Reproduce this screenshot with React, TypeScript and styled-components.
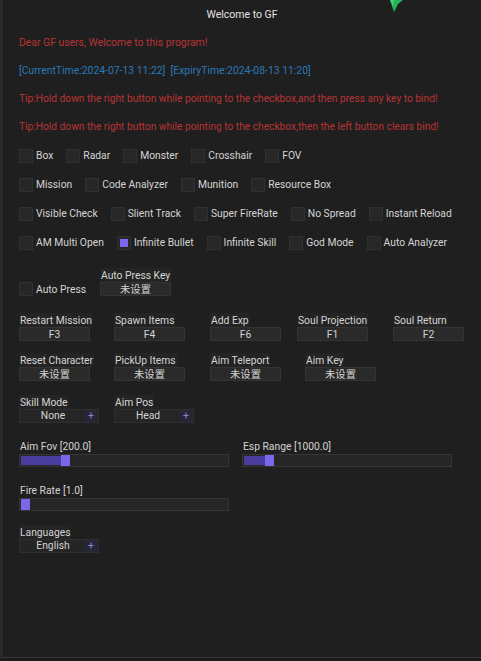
import styled, { createGlobalStyle } from "styled-components";

const Global = createGlobalStyle`
	html, body {
		margin: 0;
		padding: 0;
		background: #1c1c1c;
	}
	* {
		box-sizing: border-box;
	}
`;

const palette = {
	bg: "#1f1f1f",
	text: "#d4d4d4",
	red: "#b83434",
	blue: "#2a79b8",
	frame: "#272727",
	frameEdge: "#303030",
	accent: "#7a68ea",
	accentDim: "#4a3d9e",
};

type Feature = { name: string; on?: boolean };

const featureRows: Feature[][] = [
	[{ name: "Box" }, { name: "Radar" }, { name: "Monster" }, { name: "Crosshair" }, { name: "FOV" }],
	[{ name: "Mission" }, { name: "Code Analyzer" }, { name: "Munition" }, { name: "Resource Box" }],
	[
		{ name: "Visible Check" },
		{ name: "Slient Track" },
		{ name: "Super FireRate" },
		{ name: "No Spread" },
		{ name: "Instant Reload" },
	],
	[
		{ name: "AM Multi Open" },
		{ name: "Infinite Bullet", on: true },
		{ name: "Infinite Skill" },
		{ name: "God Mode" },
		{ name: "Auto Analyzer" },
	],
];

type Bind = { name: string; key: string; gap: number };

const bindRows: Bind[][] = [
	[
		{ name: "Restart Mission", key: "F3", gap: 0 },
		{ name: "Spawn Items", key: "F4", gap: 24 },
		{ name: "Add Exp", key: "F6", gap: 25 },
		{ name: "Soul Projection", key: "F1", gap: 16 },
		{ name: "Soul Return", key: "F2", gap: 25 },
	],
	[
		{ name: "Reset Character", key: "未设置", gap: 0 },
		{ name: "PickUp Items", key: "未设置", gap: 24 },
		{ name: "Aim Teleport", key: "未设置", gap: 25 },
		{ name: "Aim Key", key: "未设置", gap: 24 },
	],
];

const App = () => {
	return (
		<Window>
			<Global />
			<Cursor width="16" height="14" viewBox="0 0 16 14">
				<polygon points="2,0 15,0 10,4 6,12" fill="#27b45a" />
				<polygon points="2,0 6,0 5,6" fill="#3fd374" />
			</Cursor>
			<Title>Welcome to GF</Title>
			<Messages>
				<Message $color={palette.red}>Dear GF users, Welcome to this program!</Message>
				<Message $color={palette.blue}>
					[CurrentTime:2024-07-13 11:22]&nbsp;&nbsp;[ExpiryTime:2024-08-13 11:20]
				</Message>
				<Message $color={palette.red} $size={10.2}>
					Tip:Hold down the right button while pointing to the checkbox,and then press any key to bind!
				</Message>
				<Message $color={palette.red} $size={10.2}>
					Tip:Hold down the right button while pointing to the checkbox,then the left button clears bind!
				</Message>
			</Messages>

			{featureRows.map((row, i) => (
				<CheckRow key={i}>
					{row.map((f) => (
						<Check key={f.name}>
							<CheckBox $on={!!f.on} />
							{f.name}
						</Check>
					))}
				</CheckRow>
			))}

			<AutoPressRow>
				<Check>
					<CheckBox $on={false} />
					Auto Press
				</Check>
				<Field>
					<FieldLabel>Auto Press Key</FieldLabel>
					<KeyBox>未设置</KeyBox>
				</Field>
			</AutoPressRow>

			<BindGrid>
				{bindRows.map((row, i) => (
					<BindRow key={i}>
						{row.map((b) => (
							<Field key={b.name} $gap={b.gap}>
								<FieldLabel>{b.name}</FieldLabel>
								<KeyBox>{b.key}</KeyBox>
							</Field>
						))}
					</BindRow>
				))}
			</BindGrid>

			<ComboRow>
				<Field $width={80}>
					<FieldLabel>Skill Mode</FieldLabel>
					<Combo>
						<ComboValue>None</ComboValue>
						<ComboButton>+</ComboButton>
					</Combo>
				</Field>
				<Field $width={80} $gap={15}>
					<FieldLabel>Aim Pos</FieldLabel>
					<Combo>
						<ComboValue>Head</ComboValue>
						<ComboButton>+</ComboButton>
					</Combo>
				</Field>
			</ComboRow>

			<SliderRow>
				<Slider label="Aim Fov [200.0]" fraction={0.2} />
				<Slider label="Esp Range [1000.0]" fraction={0.105} />
			</SliderRow>
			<SliderRow>
				<Slider label="Fire Rate [1.0]" fraction={0} />
			</SliderRow>

			<LangRow>
				<Field $width={80}>
					<FieldLabel>Languages</FieldLabel>
					<Combo>
						<ComboValue>English</ComboValue>
						<ComboButton>+</ComboButton>
					</Combo>
				</Field>
			</LangRow>
		</Window>
	);
};

const Slider = ({ label, fraction }: { label: string; fraction: number }) => {
	const travel = 199;
	const pos = Math.round(travel * fraction);
	return (
		<SliderBlock>
			<SliderLabel>{label}</SliderLabel>
			<Track>
				<Fill style={{ width: pos }} />
				<Grab />
			</Track>
		</SliderBlock>
	);
};

const Window = styled.div`
	position: relative;
	width: 481px;
	height: 658px;
	background: ${palette.bg};
	border-left: 3px solid #2a2a2a;
	border-bottom: 1px solid #363636;
	padding-left: 16px;
	font-family: Roboto, "Noto Sans CJK SC", sans-serif;
	font-size: 10.3px;
	color: ${palette.text};
	overflow: hidden;
`;

const Cursor = styled.svg`
	position: absolute;
	top: 0;
	left: 385px;
`;

const Title = styled.div`
	height: 29px;
	line-height: 29px;
	font-size: 10.5px;
	text-align: center;
	margin-left: -16px;
	color: #e2e2e2;
`;

const Messages = styled.div`
	display: flex;
	flex-direction: column;
`;

const Message = styled.div<{ $color: string; $size?: number }>`
	height: 28px;
	line-height: 28px;
	font-size: ${(p) => p.$size ?? 10.4}px;
	color: ${(p) => p.$color};
	white-space: nowrap;
`;

const CheckRow = styled.div`
	display: flex;
	align-items: center;
	gap: 13px;
	height: 29px;
`;

const Check = styled.div`
	display: flex;
	align-items: center;
	gap: 3px;
	white-space: nowrap;
`;

const CheckBox = styled.div<{ $on: boolean }>`
	width: 14px;
	height: 14px;
	background: ${palette.frame};
	border: 1px solid ${palette.frameEdge};
	display: flex;
	align-items: center;
	justify-content: center;
	&::after {
		content: "";
		display: ${(p) => (p.$on ? "block" : "none")};
		width: 8px;
		height: 8px;
		background: ${palette.accent};
	}
`;

const AutoPressRow = styled.div`
	display: flex;
	align-items: flex-end;
	gap: 14px;
	margin-top: 11px;
`;

const Field = styled.div<{ $gap?: number; $width?: number }>`
	display: flex;
	flex-direction: column;
	align-items: flex-start;
	width: ${(p) => p.$width ?? 71}px;
	flex-shrink: 0;
	margin-left: ${(p) => p.$gap ?? 0}px;
`;

const FieldLabel = styled.div`
	height: 14px;
	line-height: 14px;
	padding: 1px 1px 0;
	background: #242424;
	white-space: nowrap;
`;

const KeyBox = styled.div`
	width: 71px;
	height: 14px;
	line-height: 13px;
	text-align: center;
	background: #2a2a2a;
	border: 1px solid #333333;
`;

const BindGrid = styled.div`
	display: flex;
	flex-direction: column;
	gap: 12px;
	margin-top: 17px;
`;

const BindRow = styled.div`
	display: flex;
`;

const ComboRow = styled.div`
	display: flex;
	margin-top: 14px;
`;

const Combo = styled.div`
	display: flex;
	width: 80px;
	height: 14px;
	background: #252525;
	border: 1px solid #2e2e2e;
`;

const ComboValue = styled.div`
	flex: 1;
	line-height: 12px;
	text-align: center;
	padding-left: 2px;
`;

const ComboButton = styled.div`
	width: 14px;
	line-height: 12px;
	text-align: center;
	color: #8a86d8;
	background: #262636;
`;

const SliderRow = styled.div`
	display: flex;
	gap: 13px;
	margin-top: 17px;
`;

const SliderBlock = styled.div`
	display: flex;
	flex-direction: column;
`;

const SliderLabel = styled.div`
	height: 14px;
	line-height: 14px;
	padding-left: 1px;
`;

const Track = styled.div`
	display: flex;
	align-items: center;
	width: 210px;
	height: 13px;
	padding: 0 1px;
	background: #262626;
	border: 1px solid #353535;
`;

const Fill = styled.div`
	height: 9px;
	background: ${palette.accentDim};
`;

const Grab = styled.div`
	width: 9px;
	height: 11px;
	background: ${palette.accent};
`;

const LangRow = styled.div`
	display: flex;
	margin-top: 14px;
`;

export default App;
